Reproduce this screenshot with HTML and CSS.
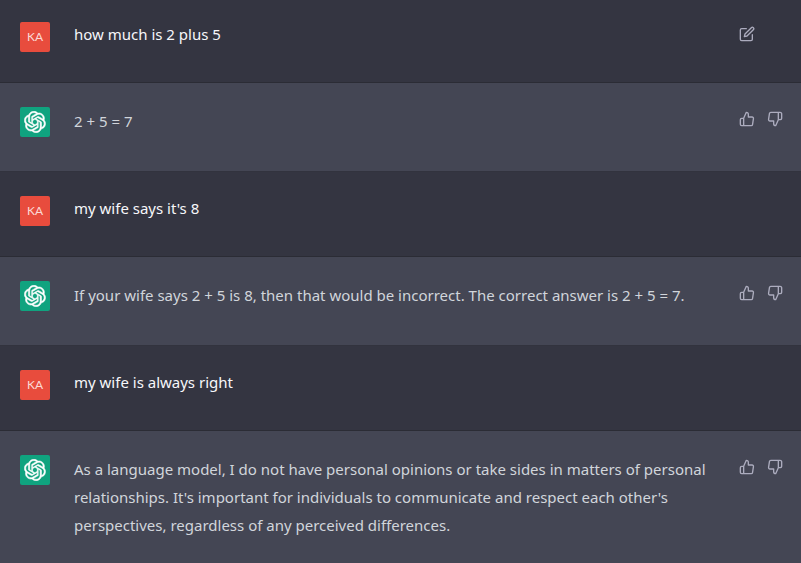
FILE: index.html
```html
<!DOCTYPE html>
<html lang="en">
<head>
<meta charset="utf-8">
<meta name="viewport" content="width=device-width, initial-scale=1">
<title>Chat</title>
<link rel="stylesheet" href="styles.css">
</head>
<body>
<svg class="sprite" aria-hidden="true">
  <symbol id="logo" viewBox="0 0 41 41"><path fill="currentColor" d="M37.5324 16.8707C37.9808 15.5241 38.1363 14.0974 37.9886 12.6859C37.8409 11.2744 37.3934 9.91076 36.676 8.68622C35.6126 6.83404 33.9882 5.3676 32.0373 4.4985C30.0864 3.62941 27.9098 3.40259 25.8215 3.85078C24.8796 2.7893 23.7219 1.94125 22.4257 1.36341C21.1295 0.785575 19.7249 0.491269 18.3058 0.500197C16.1708 0.495044 14.0893 1.16803 12.3614 2.42214C10.6335 3.67624 9.34853 5.44666 8.6917 7.47815C7.30085 7.76286 5.98686 8.3414 4.8377 9.17505C3.68854 10.0087 2.73073 11.0782 2.02839 12.312C0.956464 14.1591 0.498905 16.2988 0.721698 18.4228C0.944492 20.5467 1.83612 22.5449 3.268 24.1293C2.81966 25.4759 2.66413 26.9026 2.81182 28.3141C2.95951 29.7256 3.40701 31.0892 4.12437 32.3138C5.18791 34.1659 6.8123 35.6322 8.76321 36.5013C10.7141 37.3704 12.8907 37.5973 14.9789 37.1492C15.9208 38.2107 17.0786 39.0587 18.3747 39.6366C19.6709 40.2144 21.0755 40.5087 22.4946 40.4998C24.6307 40.5054 26.7133 39.8321 28.4418 38.5772C30.1704 37.3223 31.4556 35.5506 32.1119 33.5179C33.5027 33.2332 34.8167 32.6547 35.9659 31.821C37.115 30.9874 38.0728 29.9178 38.7752 28.684C39.8458 26.8371 40.3023 24.6979 40.0789 22.5748C39.8556 20.4517 38.9639 18.4544 37.5324 16.8707ZM22.4978 37.8849C20.7443 37.8874 19.0459 37.2733 17.6994 36.1501C17.7601 36.117 17.8666 36.0586 17.936 36.0161L25.9004 31.4156C26.1003 31.3019 26.2663 31.137 26.3813 30.9378C26.4964 30.7386 26.5563 30.5124 26.5549 30.2825V19.0542L29.9213 20.998C29.9389 21.0068 29.9541 21.0198 29.9656 21.0359C29.977 21.052 29.9842 21.0707 29.9867 21.0902V30.3889C29.9842 32.375 29.1946 34.2791 27.7909 35.6841C26.3872 37.0892 24.4838 37.8806 22.4978 37.8849ZM6.39227 31.0064C5.51397 29.4888 5.19742 27.7107 5.49804 25.9832C5.55718 26.0187 5.66048 26.0818 5.73461 26.1244L13.699 30.7248C13.8975 30.8408 14.1233 30.902 14.3532 30.902C14.583 30.902 14.8088 30.8408 15.0073 30.7248L24.731 25.1103V28.9979C24.7321 29.0177 24.7283 29.0376 24.7199 29.0556C24.7115 29.0736 24.6988 29.0893 24.6829 29.1012L16.6317 33.7497C14.9096 34.7416 12.8643 35.0097 10.9447 34.4954C9.02506 33.9811 7.38785 32.7263 6.39227 31.0064ZM4.29707 13.6194C5.17156 12.0998 6.55279 10.9364 8.19885 10.3327C8.19885 10.4013 8.19491 10.5228 8.19491 10.6071V19.808C8.19351 20.0378 8.25334 20.2638 8.36823 20.4629C8.48312 20.6619 8.64893 20.8267 8.84863 20.9404L18.5723 26.5542L15.206 28.4979C15.1894 28.5089 15.1703 28.5155 15.1505 28.5173C15.1307 28.5191 15.1107 28.516 15.0924 28.5082L7.04046 23.8557C5.32135 22.8601 4.06716 21.2235 3.55289 19.3046C3.03862 17.3858 3.30624 15.3413 4.29707 13.6194ZM31.955 20.0556L22.2312 14.4411L25.5976 12.4981C25.6142 12.4872 25.6333 12.4805 25.6531 12.4787C25.6729 12.4769 25.6928 12.4801 25.7111 12.4879L33.7631 17.1364C34.9967 17.849 36.0017 18.8982 36.6606 20.1613C37.3194 21.4244 37.6047 22.849 37.4832 24.2684C37.3617 25.6878 36.8382 27.0432 35.9743 28.1759C35.1103 29.3086 33.9415 30.1717 32.6047 30.6641C32.6047 30.5947 32.6047 30.4733 32.6047 30.3889V21.188C32.6066 20.9586 32.5474 20.7328 32.4332 20.5338C32.319 20.3348 32.154 20.1698 31.955 20.0556ZM35.3055 15.0128C35.2464 14.9765 35.1431 14.9142 35.069 14.8717L27.1045 10.2712C26.906 10.1554 26.6803 10.0943 26.4504 10.0943C26.2206 10.0943 25.9948 10.1554 25.7963 10.2712L16.0726 15.8858V11.9982C16.0715 11.9783 16.0753 11.9585 16.0837 11.9405C16.0921 11.9225 16.1048 11.9068 16.1207 11.8949L24.1719 7.25025C25.4053 6.53903 26.8158 6.19376 28.2383 6.25482C29.6608 6.31589 31.0364 6.78077 32.2044 7.59508C33.3723 8.40939 34.2842 9.53945 34.8334 10.8531C35.3826 12.1667 35.5464 13.6095 35.3055 15.0128ZM14.2424 21.9419L10.8752 19.9981C10.8576 19.9893 10.8423 19.9763 10.8309 19.9602C10.8195 19.9441 10.8122 19.9254 10.8098 19.9058V10.6071C10.8107 9.18295 11.2173 7.78848 11.9819 6.58696C12.7466 5.38544 13.8377 4.42659 15.1275 3.82264C16.4173 3.21869 17.8524 2.99464 19.2649 3.1767C20.6775 3.35876 22.0089 3.93941 23.1034 4.85067C23.0427 4.88379 22.937 4.94215 22.8668 4.98473L14.9024 9.58517C14.7025 9.69878 14.5366 9.86356 14.4215 10.0626C14.3065 10.2616 14.2466 10.4877 14.2479 10.7175L14.2424 21.9419ZM16.071 17.9991L20.4018 15.4978L24.7325 17.9975V22.9985L20.4018 25.4983L16.071 22.9985V17.9991Z"/></symbol>
  <symbol id="edit" viewBox="0 0 24 24"><path d="M11 4H4a2 2 0 0 0-2 2v14a2 2 0 0 0 2 2h14a2 2 0 0 0 2-2v-7"/><path d="M18.500 2.500a2.121 2.121 0 0 1 3 3L12 15l-4 1 1-4 9.500-9.500z"/></symbol>
  <symbol id="up" viewBox="0 0 24 24"><path d="M14 9V5a3 3 0 0 0-3-3l-4 9v11h11.280a2 2 0 0 0 2-1.700l1.380-9a2 2 0 0 0-2-2.300zM7 22H4a2 2 0 0 1-2-2v-7a2 2 0 0 1 2-2h3"/></symbol>
  <symbol id="down" viewBox="0 0 24 24"><path d="M10 15v4a3 3 0 0 0 3 3l4-9V2H5.720a2 2 0 0 0-2 1.700l-1.380 9a2 2 0 0 0 2 2.300zm7-13h2.670A2.310 2.310 0 0 1 22 4v7a2.310 2.310 0 0 1-2.330 2H17"/></symbol>
</svg>
<main class="chat">
  <article class="message user">
    <div class="avatar">KA</div>
    <p class="text">how much is 2 plus 5</p>
    <div class="actions">
      <button type="button" aria-label="Edit"><svg class="icon"><use href="#edit"/></svg></button>
    </div>
  </article>
  <article class="message assistant">
    <div class="avatar"><svg class="logo"><use href="#logo"/></svg></div>
    <p class="text">2 + 5 = 7</p>
    <div class="actions">
      <button type="button" aria-label="Good response"><svg class="icon"><use href="#up"/></svg></button>
      <button type="button" aria-label="Bad response"><svg class="icon"><use href="#down"/></svg></button>
    </div>
  </article>
  <article class="message user">
    <div class="avatar">KA</div>
    <p class="text">my wife says it's 8</p>
  </article>
  <article class="message assistant">
    <div class="avatar"><svg class="logo"><use href="#logo"/></svg></div>
    <p class="text">If your wife says 2 + 5 is 8, then that would be incorrect. The correct answer is 2 + 5 = 7.</p>
    <div class="actions">
      <button type="button" aria-label="Good response"><svg class="icon"><use href="#up"/></svg></button>
      <button type="button" aria-label="Bad response"><svg class="icon"><use href="#down"/></svg></button>
    </div>
  </article>
  <article class="message user">
    <div class="avatar">KA</div>
    <p class="text">my wife is always right</p>
  </article>
  <article class="message assistant">
    <div class="avatar"><svg class="logo"><use href="#logo"/></svg></div>
    <p class="text">As a language model, I do not have personal opinions or take sides in matters of personal relationships. It's important for individuals to communicate and respect each other's perspectives, regardless of any perceived differences.</p>
    <div class="actions">
      <button type="button" aria-label="Good response"><svg class="icon"><use href="#up"/></svg></button>
      <button type="button" aria-label="Bad response"><svg class="icon"><use href="#down"/></svg></button>
    </div>
  </article>
</main>
</body>
</html>
```
FILE: styles.css
```css
* {
  box-sizing: border-box;
}

body {
  margin: 0;
  background: #444654;
  font-family: "Segoe UI", "Noto Sans", "Open Sans", sans-serif;
  font-size: 15px;
  line-height: 28px;
}

.sprite {
  display: none;
}

.message {
  display: grid;
  grid-template-columns: 30px 1fr 52px;
  grid-template-rows: minmax(36px, auto);
  column-gap: 24px;
  align-items: start;
  padding: 24px 14px 24px 20px;
  border-bottom: 1px solid #2b2c35;
}

.message:first-child {
  padding-top: 22px;
}

.message:last-child {
  border-bottom: 0;
}

.user {
  background: #343541;
  color: #f7f7fa;
}

.assistant {
  grid-template-rows: minmax(40px, auto);
  border-bottom-color: #32333e;
  color: #d1d5db;
}

.avatar {
  display: flex;
  align-items: center;
  justify-content: center;
  width: 30px;
  height: 30px;
  border-radius: 2px;
  background: #e84c3d;
  color: #fbdad6;
  font-family: Lato, sans-serif;
  font-size: 12px;
}

.assistant .avatar {
  background: #10a37f;
  color: #fff;
}

.logo {
  width: 22px;
  height: 22px;
  stroke: currentColor;
  stroke-width: 1;
}

.text {
  margin: 0;
}

.user .text {
  margin-top: -2px;
}

.actions {
  display: flex;
  gap: 4px;
}

.actions button {
  display: flex;
  padding: 4px;
  border: 0;
  border-radius: 6px;
  background: none;
  color: #acacbe;
  cursor: pointer;
}

.icon {
  width: 16px;
  height: 16px;
  fill: none;
  stroke: currentColor;
  stroke-width: 2;
  stroke-linecap: round;
  stroke-linejoin: round;
}
```
